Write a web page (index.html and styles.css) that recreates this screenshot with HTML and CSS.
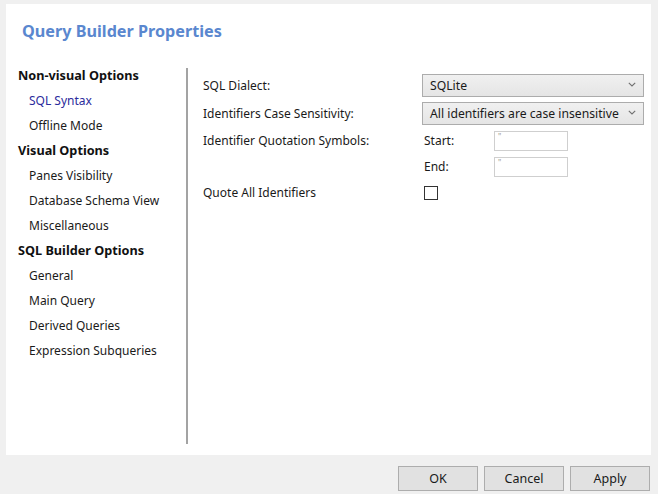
FILE: index.html
```html
<!DOCTYPE html>
<html>
<head>
<meta charset="utf-8">
<link rel="stylesheet" href="styles.css">
</head>
<body>
<div class="panel">
  <h1 class="title">Query Builder Properties</h1>
  <div class="content">
    <nav class="nav">
      <div class="nav-head">Non-visual Options</div>
      <div class="nav-item selected">SQL Syntax</div>
      <div class="nav-item">Offline Mode</div>
      <div class="nav-head">Visual Options</div>
      <div class="nav-item">Panes Visibility</div>
      <div class="nav-item">Database Schema View</div>
      <div class="nav-item">Miscellaneous</div>
      <div class="nav-head">SQL Builder Options</div>
      <div class="nav-item">General</div>
      <div class="nav-item">Main Query</div>
      <div class="nav-item">Derived Queries</div>
      <div class="nav-item">Expression Subqueries</div>
    </nav>
    <div class="separator"></div>
    <div class="form">
      <div class="label">SQL Dialect:</div>
      <div class="combo"><span>SQLite</span><svg class="chev" width="8" height="5" viewBox="0 0 8 5"><path d="M0.8 0.8 L4 4 L7.2 0.8" fill="none" stroke="#707070" stroke-width="1.1"/></svg></div>

      <div class="label">Identifiers Case Sensitivity:</div>
      <div class="combo"><span>All identifiers are case insensitive</span><svg class="chev" width="8" height="5" viewBox="0 0 8 5"><path d="M0.8 0.8 L4 4 L7.2 0.8" fill="none" stroke="#707070" stroke-width="1.1"/></svg></div>

      <div class="label">Identifier Quotation Symbols:</div>
      <div class="pair"><span class="sub">Start:</span><div class="input">"</div></div>

      <div class="label"></div>
      <div class="pair"><span class="sub">End:</span><div class="input">"</div></div>

      <div class="label">Quote All Identifiers</div>
      <div class="pair"><div class="check"></div></div>
    </div>
  </div>
</div>
<div class="footer">
  <button class="btn">OK</button>
  <button class="btn">Cancel</button>
  <button class="btn">Apply</button>
</div>
</body>
</html>
```

FILE: styles.css
```css
* { box-sizing: border-box; }
html, body { margin: 0; padding: 0; }
body {
  width: 658px;
  height: 494px;
  background: #f0f0f0;
  font-family: "Noto Sans", "Open Sans", sans-serif;
  font-size: 12px;
  color: #1a1a1a;
  overflow: hidden;
}
.panel {
  margin: 4px 7px 0 6px;
  height: 451px;
  background: #ffffff;
  display: flex;
  flex-direction: column;
}
.title {
  margin: 0;
  padding: 17px 0 0 16px;
  height: 58px;
  font-size: 16.2px;
  font-weight: 700;
  color: #5a87cf;
  line-height: 20px;
}
.content {
  display: flex;
  height: 386px;
}
.nav {
  width: 180px;
  padding-top: 1px;
}
.nav-head {
  height: 25px;
  line-height: 25px;
  padding-left: 12px;
  font-weight: 700;
  font-size: 12.7px;
  color: #111;
}
.nav-item {
  height: 25px;
  line-height: 25px;
  padding-left: 23px;
}
.nav-item.selected { color: #2b2b9c; }
.separator {
  width: 2px;
  margin-top: 6px;
  height: 376px;
  background: #a3a3a3;
}
.form {
  padding: 12px 0 0 15px;
  display: grid;
  grid-template-columns: 219px 222px;
  grid-template-rows: 23px 23px 21px 21px 21px;
  row-gap: 5px;
  align-content: start;
}
.label {
  display: flex;
  align-items: center;
}
.combo {
  display: flex;
  align-items: center;
  justify-content: space-between;
  padding: 0 7px 0 7px;
  border: 1px solid #acacac;
  background: linear-gradient(#f0f0f0, #e5e5e5);
  font-size: 12.2px;
}
.chev { margin-top: -2px; }
.pair {
  display: flex;
  align-items: center;
  padding-left: 2px;
}
.sub { width: 70px; }
.input {
  width: 74px;
  height: 20px;
  border: 1px solid #cfcfcf;
  font-size: 8px;
  color: #999;
  padding: 1px 0 0 3px;
  line-height: 8px;
}
.check {
  width: 14px;
  height: 14px;
  border: 1px solid #333;
  background: #fff;
}
.footer {
  display: flex;
  justify-content: flex-end;
  gap: 6px;
  padding: 11px 8px 0 0;
}
.btn {
  width: 80px;
  height: 25px;
  background: #e1e1e1;
  border: 1px solid #adadad;
  font-family: inherit;
  font-size: 12.5px;
  color: #1a1a1a;
  padding: 0;
}
```
